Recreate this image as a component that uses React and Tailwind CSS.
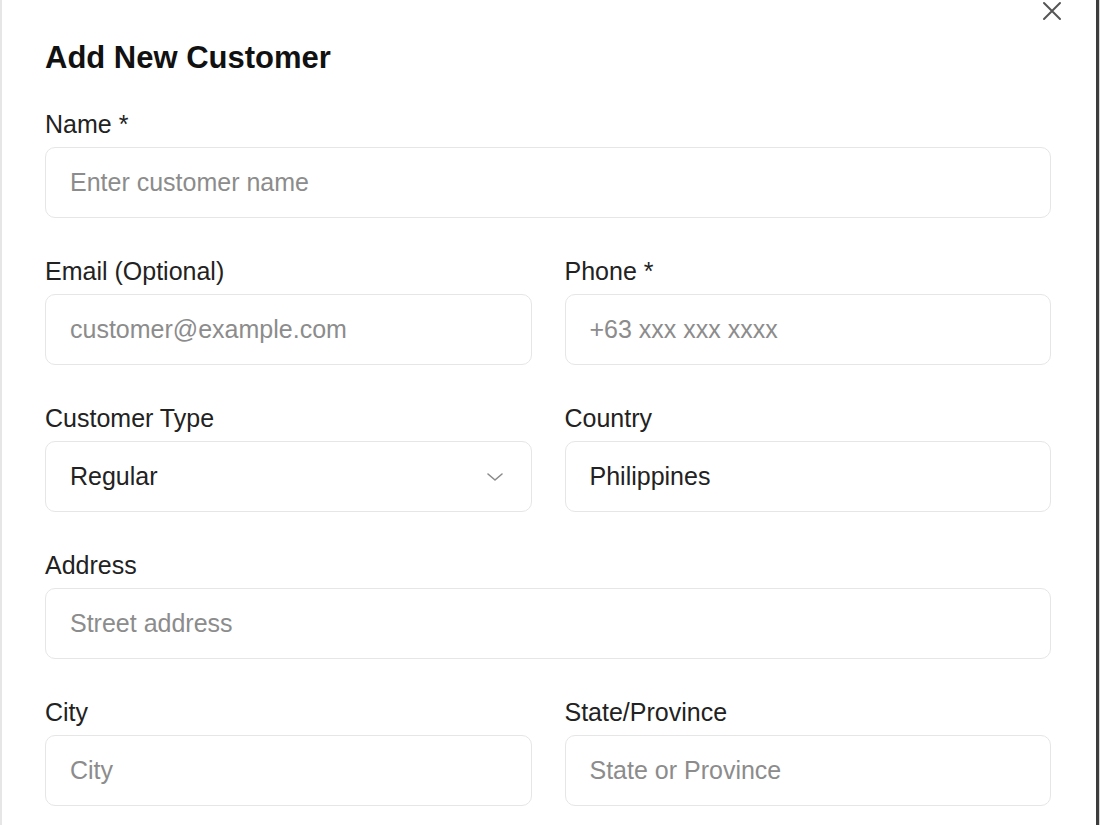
const inputBox =
  "h-[71px] w-full rounded-[10px] border border-[#e6e6e6] bg-white px-[24px] text-[25px] outline-none placeholder:text-[#8c8c8c]";

function Field({ label, children }) {
  return (
    <div className="flex flex-col">
      <label className="mb-[8px] text-[25px] leading-[30px] text-[#222]">{label}</label>
      {children}
    </div>
  );
}

function TextInput({ placeholder, value }) {
  return (
    <input
      className={`${inputBox} text-[#222]`}
      placeholder={placeholder}
      defaultValue={value}
    />
  );
}

export default function App() {
  return (
    <div
      className="h-[825px] w-[1100px] overflow-hidden border-r border-[#d4d4d4] bg-white"
      style={{ fontFamily: '"Liberation Sans", Arial, sans-serif' }}
    >
      <div className="relative h-full border-l-2 border-r-[3px] border-l-[#e6e6e6] border-r-[#3c3c3c] pl-[43px] pr-[45px] pt-[40px]">
        {/* cerrar */}
        <button className="absolute right-[34px] top-[1px] text-[#555]">
          <svg width="20" height="20" viewBox="0 0 20 20" fill="none" stroke="currentColor" strokeWidth="2" strokeLinecap="round">
            <path d="M2 2 18 18M18 2 2 18" />
          </svg>
        </button>

        <h2 className="text-[31px] font-bold leading-[36px] text-[#111]">Add New Customer</h2>

        <div className="mt-[33px] flex flex-col gap-[38px]">
          <Field label="Name *">
            <TextInput placeholder="Enter customer name" />
          </Field>

          <div className="grid grid-cols-2 gap-x-[33px]">
            <Field label="Email (Optional)">
              <TextInput placeholder="customer@example.com" />
            </Field>
            <Field label="Phone *">
              <TextInput placeholder="+63 xxx xxx xxxx" />
            </Field>
          </div>

          <div className="grid grid-cols-2 gap-x-[33px]">
            <Field label="Customer Type">
              <div className={`${inputBox} flex items-center justify-between pr-[27px] text-[#222]`}>
                <span>Regular</span>
                <svg width="18" height="10" viewBox="0 0 18 10" fill="none" stroke="#8a8a8a" strokeWidth="1.6" strokeLinecap="round" strokeLinejoin="round">
                  <path d="M2 2 9 8 16 2" />
                </svg>
              </div>
            </Field>
            <Field label="Country">
              <TextInput value="Philippines" />
            </Field>
          </div>

          <Field label="Address">
            <TextInput placeholder="Street address" />
          </Field>

          <div className="grid grid-cols-2 gap-x-[33px]">
            <Field label="City">
              <TextInput placeholder="City" />
            </Field>
            <Field label="State/Province">
              <TextInput placeholder="State or Province" />
            </Field>
          </div>
        </div>
      </div>
    </div>
  );
}
